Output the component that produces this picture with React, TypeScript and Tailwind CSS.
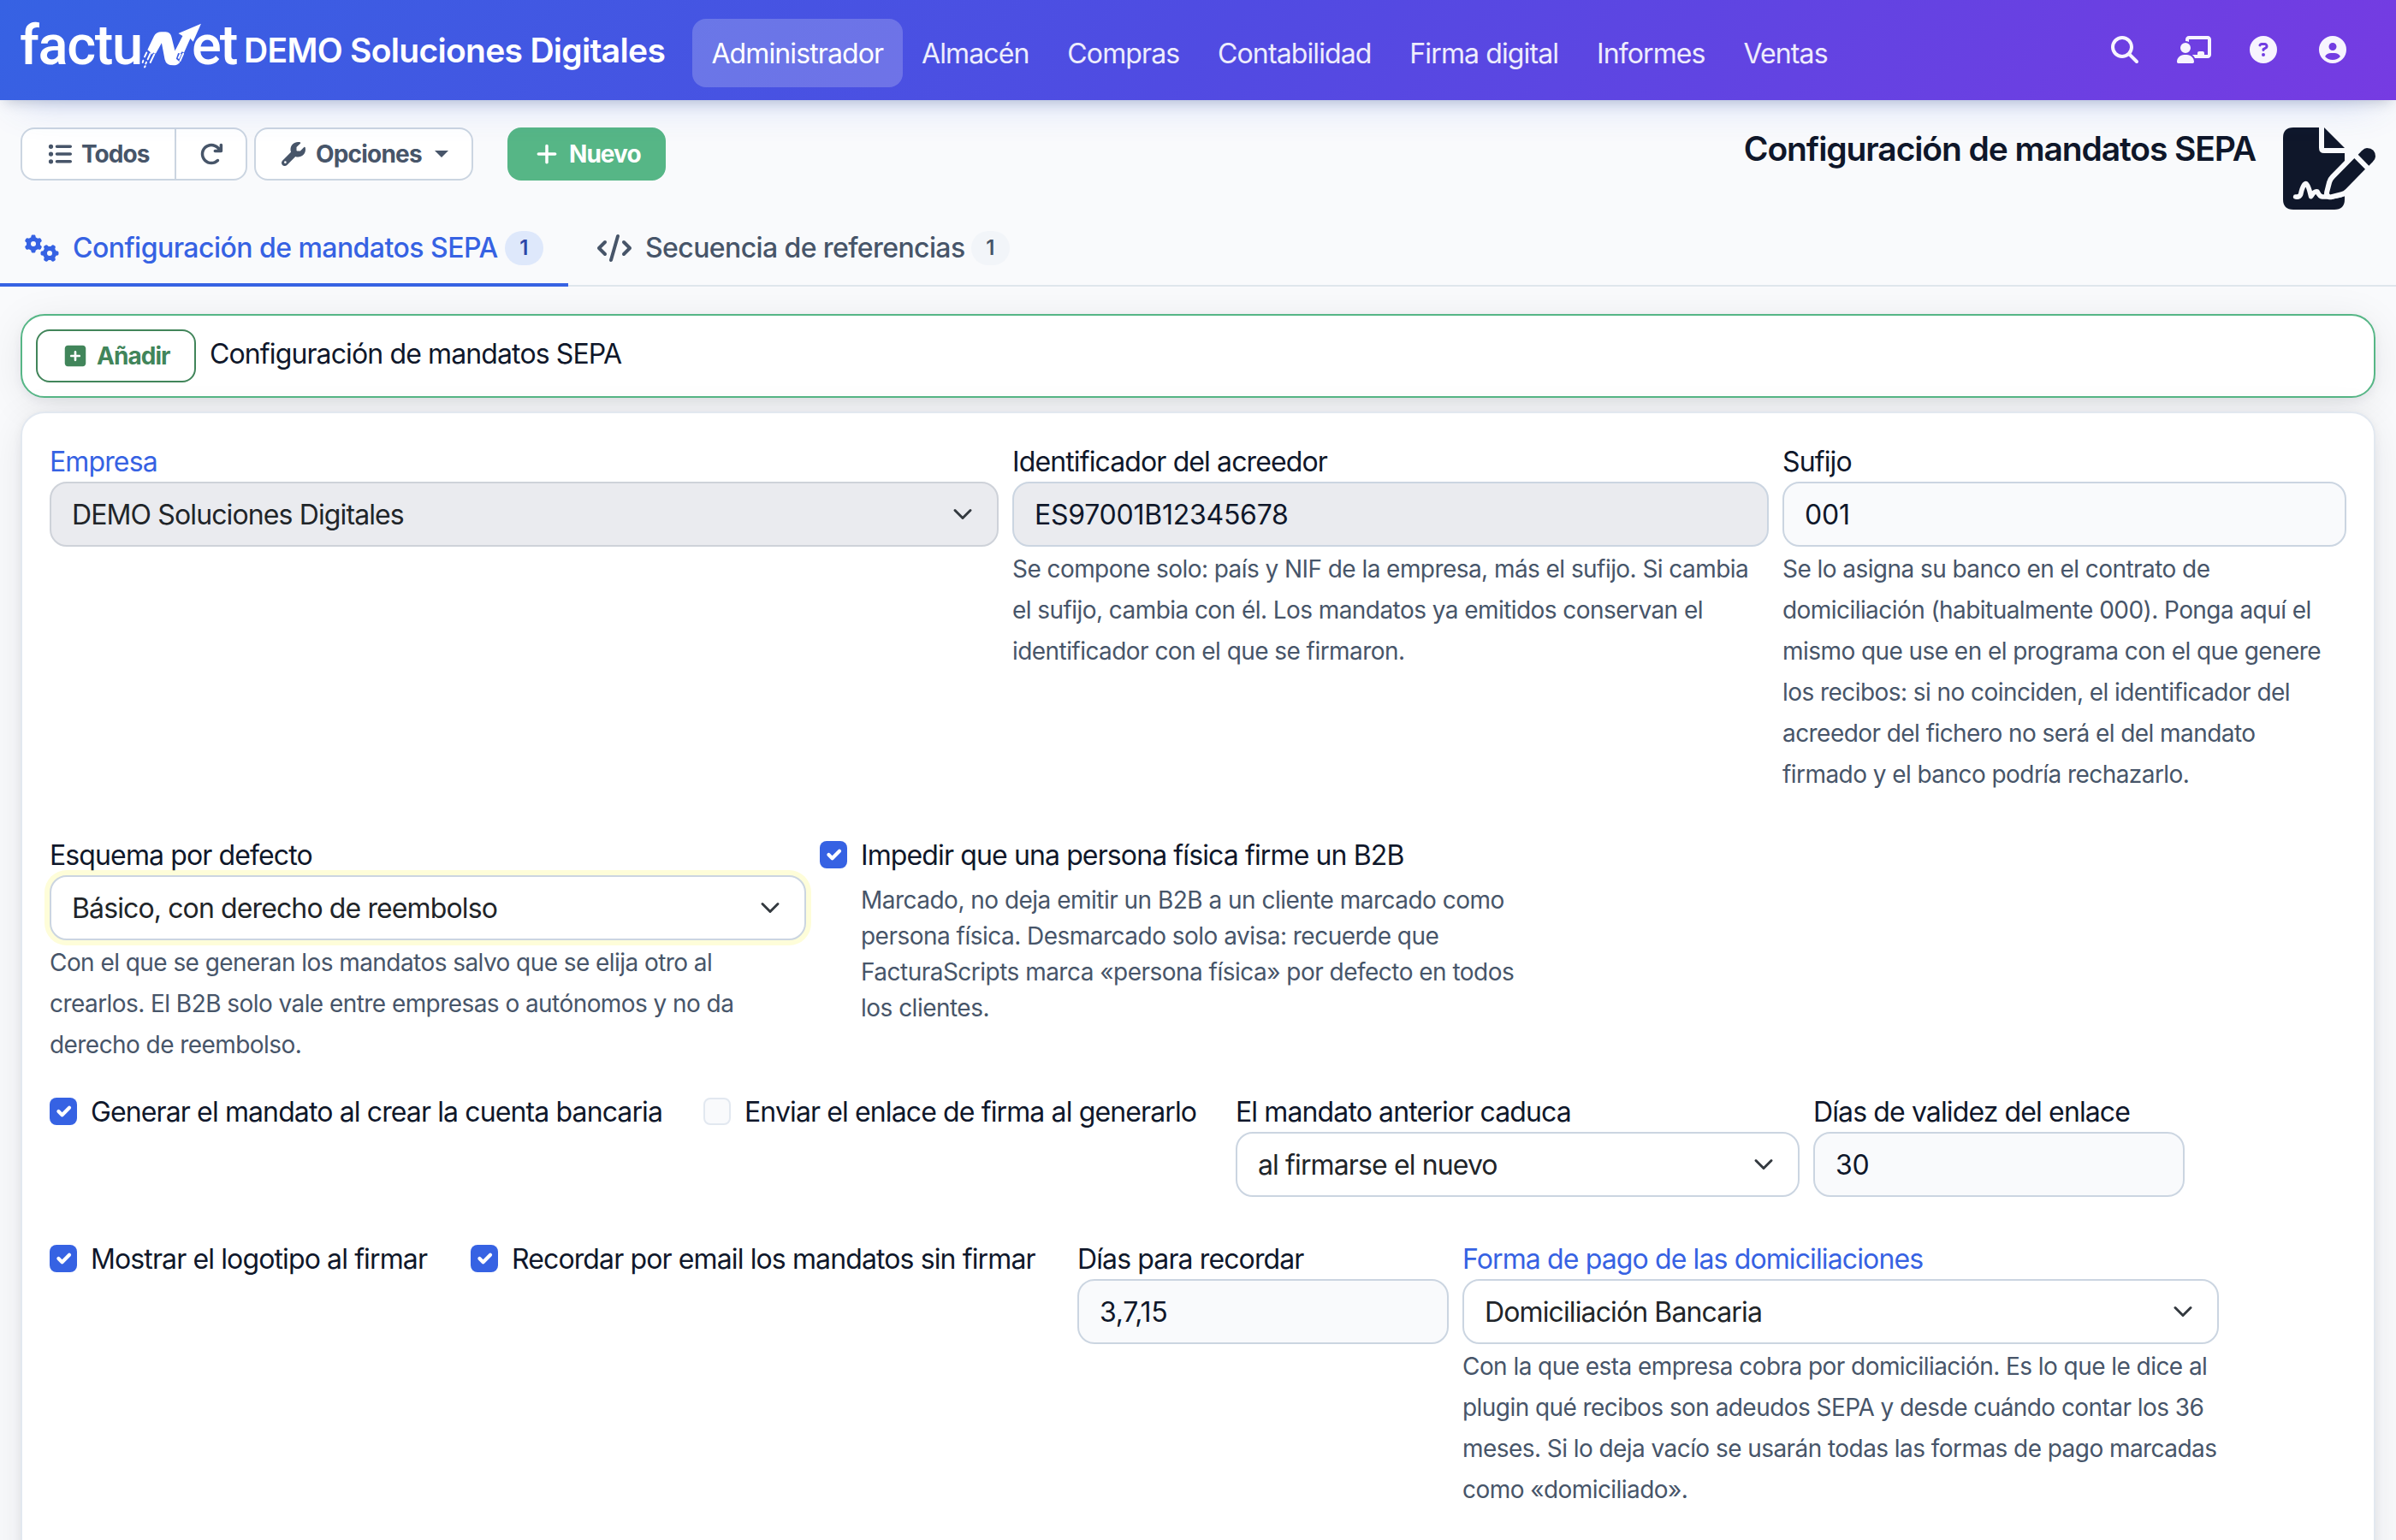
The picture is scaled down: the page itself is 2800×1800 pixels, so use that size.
import type { ReactNode } from 'react';
import clsx from 'clsx';
import {
  FaArrowRotateRight,
  FaChalkboardUser,
  FaCircleQuestion,
  FaCircleUser,
  FaCode,
  FaGears,
  FaListUl,
  FaMagnifyingGlass,
  FaPlus,
  FaSquarePlus,
  FaWrench,
} from 'react-icons/fa6';

const menu = ['Administrador', 'Almacén', 'Compras', 'Contabilidad', 'Firma digital', 'Informes', 'Ventas'];

const Logo = () => (
  <div className="-ml-px flex w-[256px] items-baseline font-[Roboto,sans-serif] text-[65px] leading-[76px] font-medium text-white">
    <span className="w-[142px] shrink-0 tracking-[-1.4px]">factu</span>
    <svg viewBox="468 22 212 160" className="-mr-[12px] h-[53px] w-[71px] shrink-0 translate-y-[5px]" fill="currentColor">
      <path d="M489 116 L512 68 Q520 53 538 53 L553 53 Q571 54 574 72 L586 120 L613 67 L598 58 L678 24 L650 88 L640 76 L618 126 L611 122 L605 130 L597 128 L590 148 L604 160 Q596 171 580 171 Q555 171 550 150 L539 92 L518 130 L510 126 L504 132 L497 122 Z" />
      <g stroke="currentColor" strokeWidth="6" strokeLinecap="round" fill="none">
        <path d="M486 126 L479 141 M499 130 L490 150 M513 132 L499 161 M474 154 L472 161 M485 160 L483 165 M481 174 L479 177" />
        <path d="M592 116 L588 126 M605 132 L599 145 M615 130 L604 155 M588 136 L587 140" />
      </g>
    </svg>
    <span className="shrink-0 tracking-[-2px]">et</span>
  </div>
);

const FileSignature = () => (
  <svg viewBox="0 0 324 288" className="h-24 w-[108px]" fill="#0f172a">
    <path d="M36 0H126V71Q126 90 144 90H216V252Q216 288 180 288H36Q0 288 0 252V36Q0 0 36 0Z" />
    <path d="M144 0L216 72H144Z" />
    <path
      d="M250 108L288 146L219 217Q212 224 203 226L165 235Q161 234 162 230L171 194Q173 186 180 179Z"
      stroke="#f9fafc"
      strokeWidth="36"
      strokeLinejoin="round"
    />
    <path
      d="M44 243Q58 245 62 234Q70 197 80 197Q88 197 98 242Q110 222 120 225Q128 242 138 243H168Q195 240 216 232"
      fill="none"
      stroke="#f9fafc"
      strokeWidth="17"
      strokeLinecap="round"
      strokeLinejoin="round"
    />
    <path d="M250 108L288 146L219 217Q212 224 203 226L168 235Q161 236 162 229L171 194Q173 186 180 179Z" />
    <path d="M263 95L276 82Q286 72 294 72Q324 74 324 102Q324 111 314 121L301 134Z" />
  </svg>
);

const Badge = ({ active }: { active?: boolean }) => (
  <span
    className={clsx(
      'flex h-10 w-[45px] items-center justify-center rounded-full pr-px text-2xl font-semibold',
      active ? 'bg-[#dee8fb] text-[#2d46a8]' : 'bg-[#f2f5f9] text-[#475569]'
    )}
  >
    1
  </span>
);

const Label = ({ children, link }: { children: ReactNode; link?: boolean }) => (
  <div className={clsx('h-12 leading-[50px] whitespace-nowrap', link ? 'text-[#3662e3]' : 'text-[#0f172a]')}>{children}</div>
);

const Help = ({ children }: { children: ReactNode }) => (
  <div className="pt-[2px] text-[28px] leading-[48px] tracking-[-0.56px] whitespace-nowrap text-[#475569]">{children}</div>
);

const Input = ({ value, disabled }: { value: string; disabled?: boolean }) => (
  <div
    className={clsx(
      'flex h-[76px] items-center rounded-[20px] border-2 border-[#cbd5e1] px-6 pt-0.5 tracking-[-0.25px] text-[#0f172a]',
      disabled ? 'bg-[#eaebef]' : 'bg-[#f9fafc]'
    )}
  >
    {value}
  </div>
);

const Select = ({ value, disabled, focused }: { value: string; disabled?: boolean; focused?: boolean }) => (
  <div
    className={clsx(
      'flex h-[76px] items-center justify-between rounded-[20px] border-2 pr-7 pl-6 text-[#212529]',
      disabled ? 'border-[#ced2d9] bg-[#eaebef]' : 'border-[#cbd5e1] bg-white',
      focused && 'shadow-[0_0_0_6px_#fefdd9]'
    )}
  >
    <span className="pt-0.5">{value}</span>
    <svg viewBox="0 0 16 16" className="h-6 w-6" fill="none" stroke="#343a40" strokeWidth="2" strokeLinecap="round" strokeLinejoin="round">
      <path d="m2 5 6 6 6-6" />
    </svg>
  </div>
);

const Check = ({ label, checked, children }: { label: string; checked?: boolean; children?: ReactNode }) => (
  <div className="flex gap-4">
    <span
      className={clsx(
        'mt-2 h-8 w-8 shrink-0 rounded-lg',
        checked ? 'bg-[#3662e3] p-0.5' : 'border-2 border-[#e2e8f0] bg-[#f9fafc]'
      )}
    >
      {checked && (
        <svg viewBox="0 0 20 20" fill="none" stroke="#fff" strokeWidth="3" strokeLinecap="round" strokeLinejoin="round">
          <path d="m6 10 3 3 6-6" />
        </svg>
      )}
    </span>
    <div>
      <Label>{label}</Label>
      {children}
    </div>
  </div>
);

export default function App() {
  return (
    <div className="h-[1800px] w-[2800px] overflow-hidden bg-[#f9fafc] font-[Inter,sans-serif] text-[32px] tracking-[-0.88px] text-[#0f172a]">
      <header className="relative flex h-[117px] items-start bg-[linear-gradient(135deg,#3662e3,#504be2_50%,#763be2)] pl-6 shadow-[0_20px_50px_-24px_rgba(54,98,227,0.3),0_6px_16px_-6px_rgba(15,23,42,0.25)]">
        <div className="flex h-[117px] w-[785px] items-start pt-[15px]">
          <Logo />
          <span className="mt-[15px] ml-[6px] text-[39px] leading-[58px] font-semibold tracking-[-0.7px] whitespace-nowrap text-white">
            DEMO Soluciones Digitales
          </span>
        </div>
        <nav className="flex pt-[22px]">
          {menu.map((item, i) => (
            <a
              key={item}
              className={clsx(
                'h-20 rounded-2xl px-[22.4px] leading-[82px] whitespace-nowrap',
                i === 0 ? 'bg-white/20 text-white' : 'text-white/90'
              )}
            >
              {item}
            </a>
          ))}
        </nav>
        <div className="mt-[42px] mr-[58px] ml-auto flex gap-[45px] text-[32px] text-[#f7f4fe]">
          <FaMagnifyingGlass />
          <FaChalkboardUser className="w-10" />
          <FaCircleQuestion />
          <FaCircleUser className="ml-1" />
        </div>
      </header>

      <div className="flex justify-between px-6 pt-8">
        <div className="flex h-[62px] text-[28px] font-bold tracking-[-0.95px] text-[#475569]">
          <div className="flex w-[265px] rounded-2xl border-2 border-[#cbd5e1] bg-white">
            <div className="flex w-[180px] items-center gap-[11px] border-r-2 border-[#cbd5e1] pl-[30px]">
              <FaListUl />
              Todos
            </div>
            <div className="flex flex-1 items-center justify-center">
              <FaArrowRotateRight />
            </div>
          </div>
          <div className="ml-2 flex w-64 items-center rounded-2xl border-2 border-[#cbd5e1] bg-white pl-[30px]">
            <FaWrench className="mr-3" />
            <span className="tracking-[-0.8px]">Opciones</span>
            <span className="ml-[15px] border-x-[8px] border-t-[8px] border-x-transparent border-t-[#475569]" />
          </div>
          <div className="ml-10 flex w-[185px] items-center gap-3 rounded-2xl bg-[#56b686] pl-8 text-white">
            <FaPlus />
            Nuevo
          </div>
        </div>
        <div className="flex">
          <h1 className="mr-8 pt-[3px] text-[39px] leading-[44px] font-semibold tracking-[-1.1px] whitespace-nowrap">
            Configuración de mandatos SEPA
          </h1>
          <FileSignature />
        </div>
      </div>

      <div className="mt-[-14px] flex h-[104px] border-b-2 border-[#dfe6ec] font-medium tracking-[-0.54px]">
        <div className="-mb-0.5 flex w-[664px] items-center gap-[15px] border-b-4 border-[#3662e3] pt-[18px] pl-7 text-[#3662e3]">
          <FaGears className="w-[42px]" />
          <span className="w-[490px] whitespace-nowrap">Configuración de mandatos SEPA</span>
          <Badge active />
        </div>
        <div className="flex items-center gap-[15px] pt-4 pl-[33px] text-[#475569]">
          <FaCode className="w-[42px]" />
          <span className="w-[366px] tracking-[-0.6px] whitespace-nowrap">Secuencia de referencias</span>
          <Badge />
        </div>
      </div>

      <main className="px-6 pt-8">
        <div className="flex h-[98px] gap-4 rounded-[28px] border-2 border-[#56b686] bg-white p-4 shadow-[0_8px_48px_rgba(15,23,42,0.08),0_4px_12px_rgba(15,23,42,0.06)]">
          <div className="flex h-[62px] w-[187px] items-center gap-[11px] rounded-2xl border-2 border-[#41855a] pl-[30px] text-[28px] font-bold tracking-[-0.95px] text-[#41855a]">
            <FaSquarePlus />
            Añadir
          </div>
          <span className="leading-[57px]">Configuración de mandatos SEPA</span>
        </div>

        <div className="relative mt-4 h-[1400px] rounded-[28px] border-2 border-[#e2e8f0] bg-white px-8 pt-8 shadow-[0_8px_48px_rgba(15,23,42,0.08),0_4px_12px_rgba(15,23,42,0.06)]">
          <div className="flex h-[460px] gap-4">
            <div className="w-[1109px]">
              <Label link>Empresa</Label>
              <Select value="DEMO Soluciones Digitales" disabled />
            </div>
            <div className="w-[884px]">
              <Label>Identificador del acreedor</Label>
              <Input value="ES97001B12345678" disabled />
              <Help>
                Se compone solo: país y NIF de la empresa, más el sufijo. Si cambia
                <br />
                el sufijo, cambia con él. Los mandatos ya emitidos conservan el
                <br />
                identificador con el que se firmaron.
              </Help>
            </div>
            <div className="w-[659px]">
              <Label>Sufijo</Label>
              <Input value="001" />
              <Help>
                Se lo asigna su banco en el contrato de
                <br />
                domiciliación (habitualmente 000). Ponga aquí el
                <br />
                mismo que use en el programa con el que genere
                <br />
                los recibos: si no coinciden, el identificador del
                <br />
                acreedor del fichero no será el del mandato
                <br />
                firmado y el banco podría rechazarlo.
              </Help>
            </div>
          </div>

          <div className="flex h-[300px] gap-4">
            <div className="w-[884px]">
              <Label>Esquema por defecto</Label>
              <Select value="Básico, con derecho de reembolso" focused />
              <Help>
                Con el que se generan los mandatos salvo que se elija otro al
                <br />
                crearlos. El B2B solo vale entre empresas o autónomos y no da
                <br />
                derecho de reembolso.
              </Help>
            </div>
            <Check label="Impedir que una persona física firme un B2B" checked>
              <div className="mt-[8px] text-[28px] leading-[42px] tracking-[-0.52px] text-[#475569]">
                Marcado, no deja emitir un B2B a un cliente marcado como
                <br />
                persona física. Desmarcado solo avisa: recuerde que
                <br />
                FacturaScripts marca «persona física» por defecto en todos
                <br />
                los clientes.
              </div>
            </Check>
          </div>

          <div className="flex h-[172px]">
            <div className="w-[764px]">
              <Check label="Generar el mandato al crear la cuenta bancaria" checked />
            </div>
            <div className="w-[622px]">
              <Check label="Enviar el enlace de firma al generarlo" />
            </div>
            <div className="mr-4 w-[659px]">
              <Label>El mandato anterior caduca</Label>
              <Select value="al firmarse el nuevo" />
            </div>
            <div className="w-[434px]">
              <Label>Días de validez del enlace</Label>
              <Input value="30" />
            </div>
          </div>

          <div className="flex">
            <div className="w-[492px]">
              <Check label="Mostrar el logotipo al firmar" checked />
            </div>
            <div className="w-[709px]">
              <Check label="Recordar por email los mandatos sin firmar" checked />
            </div>
            <div className="mr-4 w-[434px]">
              <Label>Días para recordar</Label>
              <Input value="3,7,15" />
            </div>
            <div className="w-[884px]">
              <Label link>Forma de pago de las domiciliaciones</Label>
              <Select value="Domiciliación Bancaria" />
              <Help>
                Con la que esta empresa cobra por domiciliación. Es lo que le dice al
                <br />
                plugin qué recibos son adeudos SEPA y desde cuándo contar los 36
                <br />
                meses. Si lo deja vacío se usarán todas las formas de pago marcadas
                <br />
                como «domiciliado».
              </Help>
            </div>
          </div>
        </div>
      </main>
    </div>
  );
}
